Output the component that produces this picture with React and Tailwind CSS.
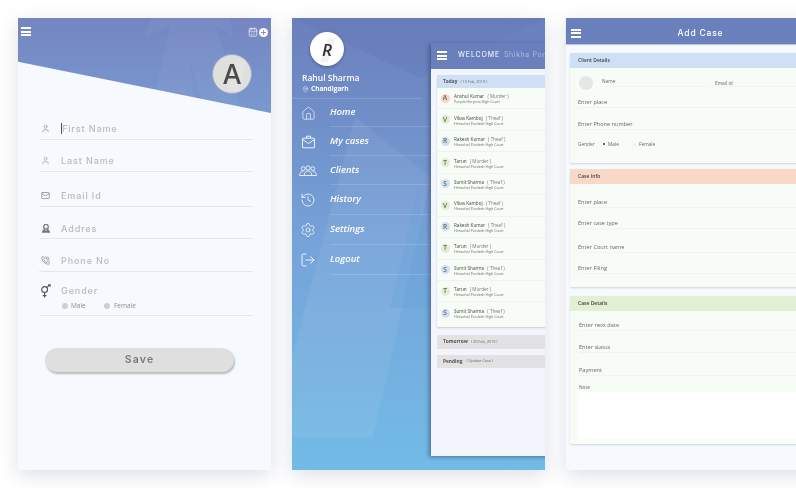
import React from "react";
import { User, Mail, PhoneCall, House, History, Settings, LogOut, MapPin, CalendarDays, Plus } from "lucide-react";

const sans = "font-['Open_Sans',sans-serif]";
const wide = "font-['Inter',sans-serif]";

function Burger({ className = "" }) {
  return (
    <div className={`flex flex-col justify-between w-[10px] h-[9px] ${className}`}>
      <span className="block h-[2px] bg-white" />
      <span className="block h-[2px] bg-white" />
      <span className="block h-[2px] bg-white" />
    </div>
  );
}

const GenderIcon = () => (
  <svg width="12" height="14" viewBox="0 0 13 15" fill="none" stroke="#555" strokeWidth="1.2">
    <circle cx="5" cy="6" r="3.2" />
    <path d="M5 9.2V14.5M3 12.5H7M7.4 3.6L10.8 0.8M8.6 0.8H11V3" />
  </svg>
);

const PinUser = () => (
  <svg width="10" height="10" viewBox="0 0 13 13" fill="#777">
    <circle cx="6.5" cy="3.6" r="3" fill="none" stroke="#777" strokeWidth="1.6" />
    <path d="M6.5 9L4.6 6.6C3 7 2 8 1 11.5H12C11 8 10 7 8.4 6.6Z" />
  </svg>
);

const CaseIcon = () => (
  <svg width="15" height="14" viewBox="0 0 15 14" fill="none" stroke="#fff" strokeWidth="0.9">
    <rect x="1.5" y="3.2" width="12" height="9.6" rx="0.8" />
    <path d="M5.5 3V1.2H9.5V3M1.5 4.5L7.5 8.5L13.5 4.5" />
  </svg>
);

const ClientsIcon = () => (
  <svg width="18" height="11" viewBox="0 0 18 11" fill="none" stroke="#fff" strokeWidth="0.8">
    <circle cx="9" cy="3" r="2.2" />
    <circle cx="4.2" cy="3.6" r="1.9" />
    <circle cx="13.8" cy="3.6" r="1.9" />
    <path d="M5.2 10.5C5.2 7.5 7 6 9 6S12.8 7.5 12.8 10.5ZM0.6 10.5C0.6 7.8 2.2 6.3 4.2 6.3M17.4 10.5C17.4 7.8 15.8 6.3 13.8 6.3M0.6 10.5H5.2M12.8 10.5H17.4" />
  </svg>
);

function Field({ className, icon, label }) {
  return (
    <div className={`flex items-end border-b border-[#e3e6ea] ${className}`}>
      <div className="w-[22px] h-[13px] flex justify-center items-center shrink-0 pr-[9px] self-end">{icon}</div>
      <div className="flex-1">
        <div className={`${wide} text-[9px] leading-[12px] tracking-[0.9px] font-medium text-[#b9babd]`}>{label}</div>
      </div>
    </div>
  );
}

function PhoneOne() {
  return (
    <div className="relative w-[253px] h-[452px] shrink-0 bg-[#f6f9fe] shadow-[0_5px_18px_rgba(90,110,140,0.22)]">
      <div className="relative h-[95px] bg-gradient-to-b from-[#7585c1] to-[#7899cf] [clip-path:polygon(0_0,100%_0,100%_100%,0_46%)]">
        <svg className="absolute inset-0" width="253" height="95" viewBox="0 0 253 95">
          <path d="M132 0L127 18L152 8L135 85L178 95L172 45L188 95L225 95L198 8L215 18L212 0Z" fill="#ffffff" opacity="0.04" />
        </svg>
        <div className="relative flex justify-between items-start pl-[3px] pr-[3px] pt-[9px]">
          <Burger />
          <div className="flex items-center gap-[1px]">
            <CalendarDays size={10} color="#fff" strokeWidth={1.6} />
            <div className="w-[9px] h-[9px] rounded-full bg-white flex items-center justify-center">
              <Plus size={7} color="#7787c2" strokeWidth={3} />
            </div>
          </div>
        </div>
        <div className="absolute left-[194px] top-[36px] w-[40px] h-[40px] rounded-full bg-[#dfdfdc] border border-[#9aa7cc] flex items-center justify-center overflow-hidden">
          <svg className="absolute inset-0" width="40" height="40" viewBox="0 0 40 40">
            <path d="M22 4L34 4L26 36L14 36Z" fill="#ffffff" opacity="0.14" />
          </svg>
          <span className={`relative ${wide} font-medium text-[27px] leading-none text-[#4b4b4b]`}>A</span>
        </div>
      </div>
      <div className="pl-[21px] pr-[18px]">
        <Field className="h-[27px] pb-[4px]" icon={<User size={9} color="#999" />} label={<span className="border-l border-[#555]">First Name</span>} />
        <Field className="h-[32px] pb-[4px]" icon={<User size={9} color="#aaa" />} label="Last Name" />
        <Field className="h-[35px] pb-[4px]" icon={<Mail size={9} color="#888" />} label="Email Id" />
        <Field className="h-[32px] pb-[3px]" icon={<PinUser />} label="Addres" />
        <Field className="h-[33px] pb-[4px]" icon={<PhoneCall size={9} color="#888" />} label="Phone No" />
        <div className="flex h-[44px] border-b border-[#e3e6ea] pt-[13px]">
          <div className="w-[22px] flex justify-center pr-[9px] mt-[-1px]"><GenderIcon /></div>
          <div>
            <div className={`${wide} text-[9px] leading-[12px] tracking-[0.9px] font-medium text-[#b9babd]`}>Gender</div>
            <div className={`${sans} flex items-center mt-[4px] text-[6.5px] leading-[9px] text-[#8d8d8f]`}>
              <span className="w-[6px] h-[6px] rounded-full bg-[#cfcfd1] mr-[3px] ml-[1px]" />
              <span className="w-[24px]">Male</span>
              <span className="w-[6px] h-[6px] rounded-full bg-[#cfcfd1] mr-[4px] ml-[9px]" />
              <span>Female</span>
            </div>
          </div>
        </div>
        <div className={`${wide} mt-[32px] ml-[6px] w-[189px] h-[24px] rounded-full bg-[#e0dfdf] shadow-[1px_2px_2px_rgba(0,0,0,0.25)] flex items-center justify-center text-[10.5px] font-semibold tracking-[1.2px] text-[#7a7a7d]`}>
          Save
        </div>
      </div>
    </div>
  );
}

const menu = [
  { label: "Home", icon: <House size={15} color="#fff" strokeWidth={1} />, h: "h-[28px]" },
  { label: "My cases", icon: <CaseIcon />, h: "h-[29px]" },
  { label: "Clients", icon: <ClientsIcon />, h: "h-[29px]" },
  { label: "History", icon: <History size={16} color="#fff" strokeWidth={1.2} />, h: "h-[30px]" },
  { label: "Settings", icon: <Settings size={16} color="#fff" strokeWidth={1.1} />, h: "h-[30px]" },
  { label: "Logout", icon: <LogOut size={16} color="#fff" strokeWidth={1.3} />, h: "h-[30px]" },
];

const cases = [
  ["A", "Anshul Kumar", "( Murder )", "Punjab Haryana High Court", "bg-[#f6d5c4]"],
  ["V", "Vikas Kamboj", "( Theaf )", "Himachal Pordesh High Court", "bg-[#e1efd0]"],
  ["R", "Rakesh Kumar", "( Theaf )", "Himachal Pordesh High Court", "bg-[#cfe0f5]"],
  ["T", "Tarun", "( Murder )", "Himachal Pordesh High Court", "bg-[#e1efd0]"],
  ["S", "Sumit Sharma", "( Theaf )", "Himachal Pordesh High Court", "bg-[#cfe0f5]"],
  ["V", "Vikas Kamboj", "( Theaf )", "Himachal Pordesh High Court", "bg-[#e1efd0]"],
  ["R", "Rakesh Kumar", "( Theaf )", "Himachal Pordesh High Court", "bg-[#cfe0f5]"],
  ["T", "Tarun", "( Murder )", "Himachal Pordesh High Court", "bg-[#e1efd0]"],
  ["S", "Sumit Sharma", "( Theaf )", "Himachal Pordesh High Court", "bg-[#cfe0f5]"],
  ["T", "Tarun", "( Murder )", "Himachal Pordesh High Court", "bg-[#e1efd0]"],
  ["S", "Sumit Sharma", "( Theaf )", "Himachal Pordesh High Court", "bg-[#cfe0f5]"],
];

function CaseRow({ c }) {
  return (
    <div className="h-[21.45px] flex items-center pl-[3.5px] border-b border-[#eef3ee] last:border-b-0">
      <div className={`w-[9px] h-[9px] rounded-full ${c[4]} flex items-center justify-center ${sans} text-[6.5px] font-semibold text-[#666] shrink-0`}>{c[0]}</div>
      <div className="ml-[4.5px] pt-[2px]">
        <div className={`${sans} text-[4.6px] leading-[6px] text-[#444] whitespace-nowrap`}>
          {c[1]} <span className="ml-[2px] text-[#777]">{c[2]}</span>
        </div>
        <div className={`${sans} text-[3.6px] leading-[6px] text-[#666] whitespace-nowrap`}>{c[3]}</div>
      </div>
    </div>
  );
}

function PhoneTwo() {
  return (
    <div className="relative w-[253px] h-[452px] shrink-0 overflow-hidden bg-gradient-to-b from-[#6b7fbc] via-[#76a3d9] to-[#72bbe7] shadow-[0_5px_18px_rgba(90,110,140,0.22)]">
      <svg className="absolute inset-0" width="253" height="452" viewBox="0 0 253 452">
        <path d="M0 0L128 60L253 0Z" fill="#5f75b4" opacity="0.25" />
        <path d="M63 99L0 340V420H81L139 160Z" fill="#ffffff" opacity="0.06" />
        <path d="M126 172L98 290H140Z" fill="#5f9fd8" opacity="0.22" />
      </svg>

      <div className="relative">
        <div className="pl-[18px] pt-[14px]">
          <div className="relative w-[34px] h-[34px] rounded-full bg-white shadow-[0_1px_3px_rgba(0,0,0,0.35)] flex items-center justify-center overflow-hidden">
            <svg className="absolute inset-0" width="34" height="34" viewBox="0 0 34 34">
              <path d="M18 6H26L18 30H10Z" fill="#000000" opacity="0.05" />
            </svg>
            <span className={`relative ${sans} italic font-semibold text-[17px] leading-none text-[#333]`}>R</span>
          </div>
        </div>
        <div className={`${sans} pl-[10px] mt-[6px] text-[8.5px] leading-[12px] font-semibold text-white whitespace-nowrap`}>Rahul Sharma</div>
        <div className={`${sans} pl-[10px] flex items-center text-[6.5px] leading-[10px] font-bold text-white`}>
          <MapPin size={7} color="#fff" strokeWidth={1.4} />
          <span className="ml-[2px]">Chandigarh</span>
        </div>
        <div className="mt-[4px] w-[129px] border-b border-white/15" />
        {menu.map((m) => (
          <div key={m.label} className={`flex ${m.h}`}>
            <div className="w-[38px] flex items-center justify-center pr-[6px]">{m.icon}</div>
            <div className={`${sans} flex-1 flex items-center border-b border-white/15 text-[9.5px] italic font-semibold text-white`}>{m.label}</div>
          </div>
        ))}
      </div>

      <div className="absolute left-[139px] top-[25px] w-[170px] h-[413px] bg-[#f2f5fb] shadow-[-2px_1px_4px_rgba(40,60,110,0.55)]">
        <div className="h-[26px] bg-[#6a80bd] flex items-center pl-[6px] pb-[1px]">
          <Burger className="shrink-0" />
          <div className={`${wide} ml-[11px] text-[7px] tracking-[0.9px] text-white whitespace-nowrap`}>
            WELCOME <span className="ml-[1px] tracking-[0.6px] text-[#aebbe0]">Shikha Pondey</span>
          </div>
        </div>
        <div className="pl-[6px] pt-[6px]">
          <div className="rounded-[1px] shadow-[0_1px_2px_rgba(0,0,0,0.18)] bg-[#f7fdf6] pb-[3px]">
            <div className={`${sans} h-[13px] bg-[#cfe0f5] flex items-center pl-[6px] text-[4.8px] font-bold text-[#555] whitespace-nowrap`}>
              Today <span className="ml-[3px] font-normal text-[#666] text-[3.8px]">( 10 Feb, 2019 )</span>
            </div>
            {cases.map((c, i) => <CaseRow key={i} c={c} />)}
          </div>
          <div className={`${sans} mt-[8px] h-[14px] bg-[#e3e1e3] rounded-[1px] flex items-center pl-[6px] text-[4.8px] font-bold text-[#555] whitespace-nowrap`}>
            Tomorrow <span className="ml-[3px] font-normal text-[#666] text-[3.8px]">( 20 Feb, 2019 )</span>
          </div>
          <div className={`${sans} mt-[6px] h-[13px] bg-[#e3e1e3] rounded-[1px] flex items-center pl-[6px] text-[4.8px] font-bold text-[#555] whitespace-nowrap`}>
            Pending <span className="ml-[4px] font-normal text-[#666] text-[3.8px]">( Update Case )</span>
          </div>
        </div>
      </div>
    </div>
  );
}

function Line({ className, label }) {
  return (
    <div className={`flex items-end border-b border-[#f0f5ee] ${className}`}>
      <span className={`${sans} text-[5.6px] leading-[8px] pb-[1px] text-[#666] whitespace-nowrap`}>{label}</span>
    </div>
  );
}

function Card({ title, className, bg, children }) {
  return (
    <div className={`bg-[#f7fdf6] shadow-[0_1px_2px_rgba(0,0,0,0.15)] rounded-[1px] ${className}`}>
      <div className={`${sans} h-[15px] ${bg} flex items-center pl-[8px] text-[5px] font-semibold text-[#444]`}>{title}</div>
      {children}
    </div>
  );
}

function PhoneThree() {
  return (
    <div className="w-[253px] h-[452px] shrink-0 bg-[#f6f9fe] shadow-[0_5px_18px_rgba(90,110,140,0.22)]">
      <div className="relative h-[26px] bg-[#6a80bd] flex items-center pl-[5px] shadow-[0_1px_1px_rgba(0,0,0,0.2)]">
        <Burger className="mt-[4px]" />
        <div className={`${wide} absolute left-0 right-[-16px] text-center text-[8.5px] tracking-[0.8px] font-medium text-white pt-[5px]`}>Add Case</div>
      </div>
      <div className="pl-[4px] pt-[9px]">
        <Card title="Client Details" bg="bg-[#cde0f5]" className="h-[110px]">
          <div className="px-[8px]">
            <div className="flex h-[19px] items-end">
              <div className="w-[14px] h-[14px] rounded-full bg-[#e6e6e6] mb-[-3px] ml-[1px] shrink-0" />
              <div className="ml-[9px] w-[108px] border-b border-[#f0f5ee] h-[9px]">
                <span className={`${sans} block text-[4.8px] leading-[6px] text-[#666]`}>Name</span>
              </div>
              <div className={`${sans} ml-[5px] flex-1 border-b border-[#f0f5ee] h-[7px] text-[4.8px] leading-[6px] text-[#666]`}>Email id</div>
            </div>
            <Line className="h-[21px]" label="Enter place" />
            <Line className="h-[22px]" label="Enter Phone number" />
            <div className={`${sans} mt-[10px] flex items-center text-[4.8px] leading-[8px] text-[#666]`}>
              <span className="w-[25px]">Gender</span>
              <span className="w-[2px] h-[2px] rounded-full bg-[#333] mr-[3px]" />
              <span className="w-[25px]">Male</span>
              <span className="w-[3px] h-[3px] rounded-full bg-[#eeeeee] mr-[3px]" />
              <span>Female</span>
            </div>
          </div>
        </Card>
        <Card title="Case Info" bg="bg-[#f9d8c8]" className="h-[118px] mt-[6px]">
          <div className="px-[8px]">
            <Line className="h-[24px]" label="Enter place" />
            <Line className="h-[21px]" label="Enter  case type" />
            <Line className="h-[24px]" label="Enter Court name" />
            <Line className="h-[21px]" label="Enter Filing" />
          </div>
        </Card>
        <Card title="Case Details" bg="bg-[#e2efd3]" className="h-[148px] mt-[9px]">
          <div className="pl-[9px] pr-[8px]">
            <Line className="h-[20px]" label="Enter next date" />
            <Line className="h-[22px]" label="Enter status" />
            <Line className="h-[23px]" label="Payment" />
            <div className={`${sans} mt-[7px] text-[4.8px] leading-[8px] text-[#666]`}>Note</div>
            <div className="mt-[1px] h-[47px] bg-white" />
          </div>
        </Card>
      </div>
    </div>
  );
}

export default function App() {
  return (
    <div className="w-[796px] h-[488px] overflow-hidden bg-white flex gap-[21px] pl-[18px] pt-[18px] blur-[0.35px]">
      <PhoneOne />
      <PhoneTwo />
      <PhoneThree />
    </div>
  );
}
